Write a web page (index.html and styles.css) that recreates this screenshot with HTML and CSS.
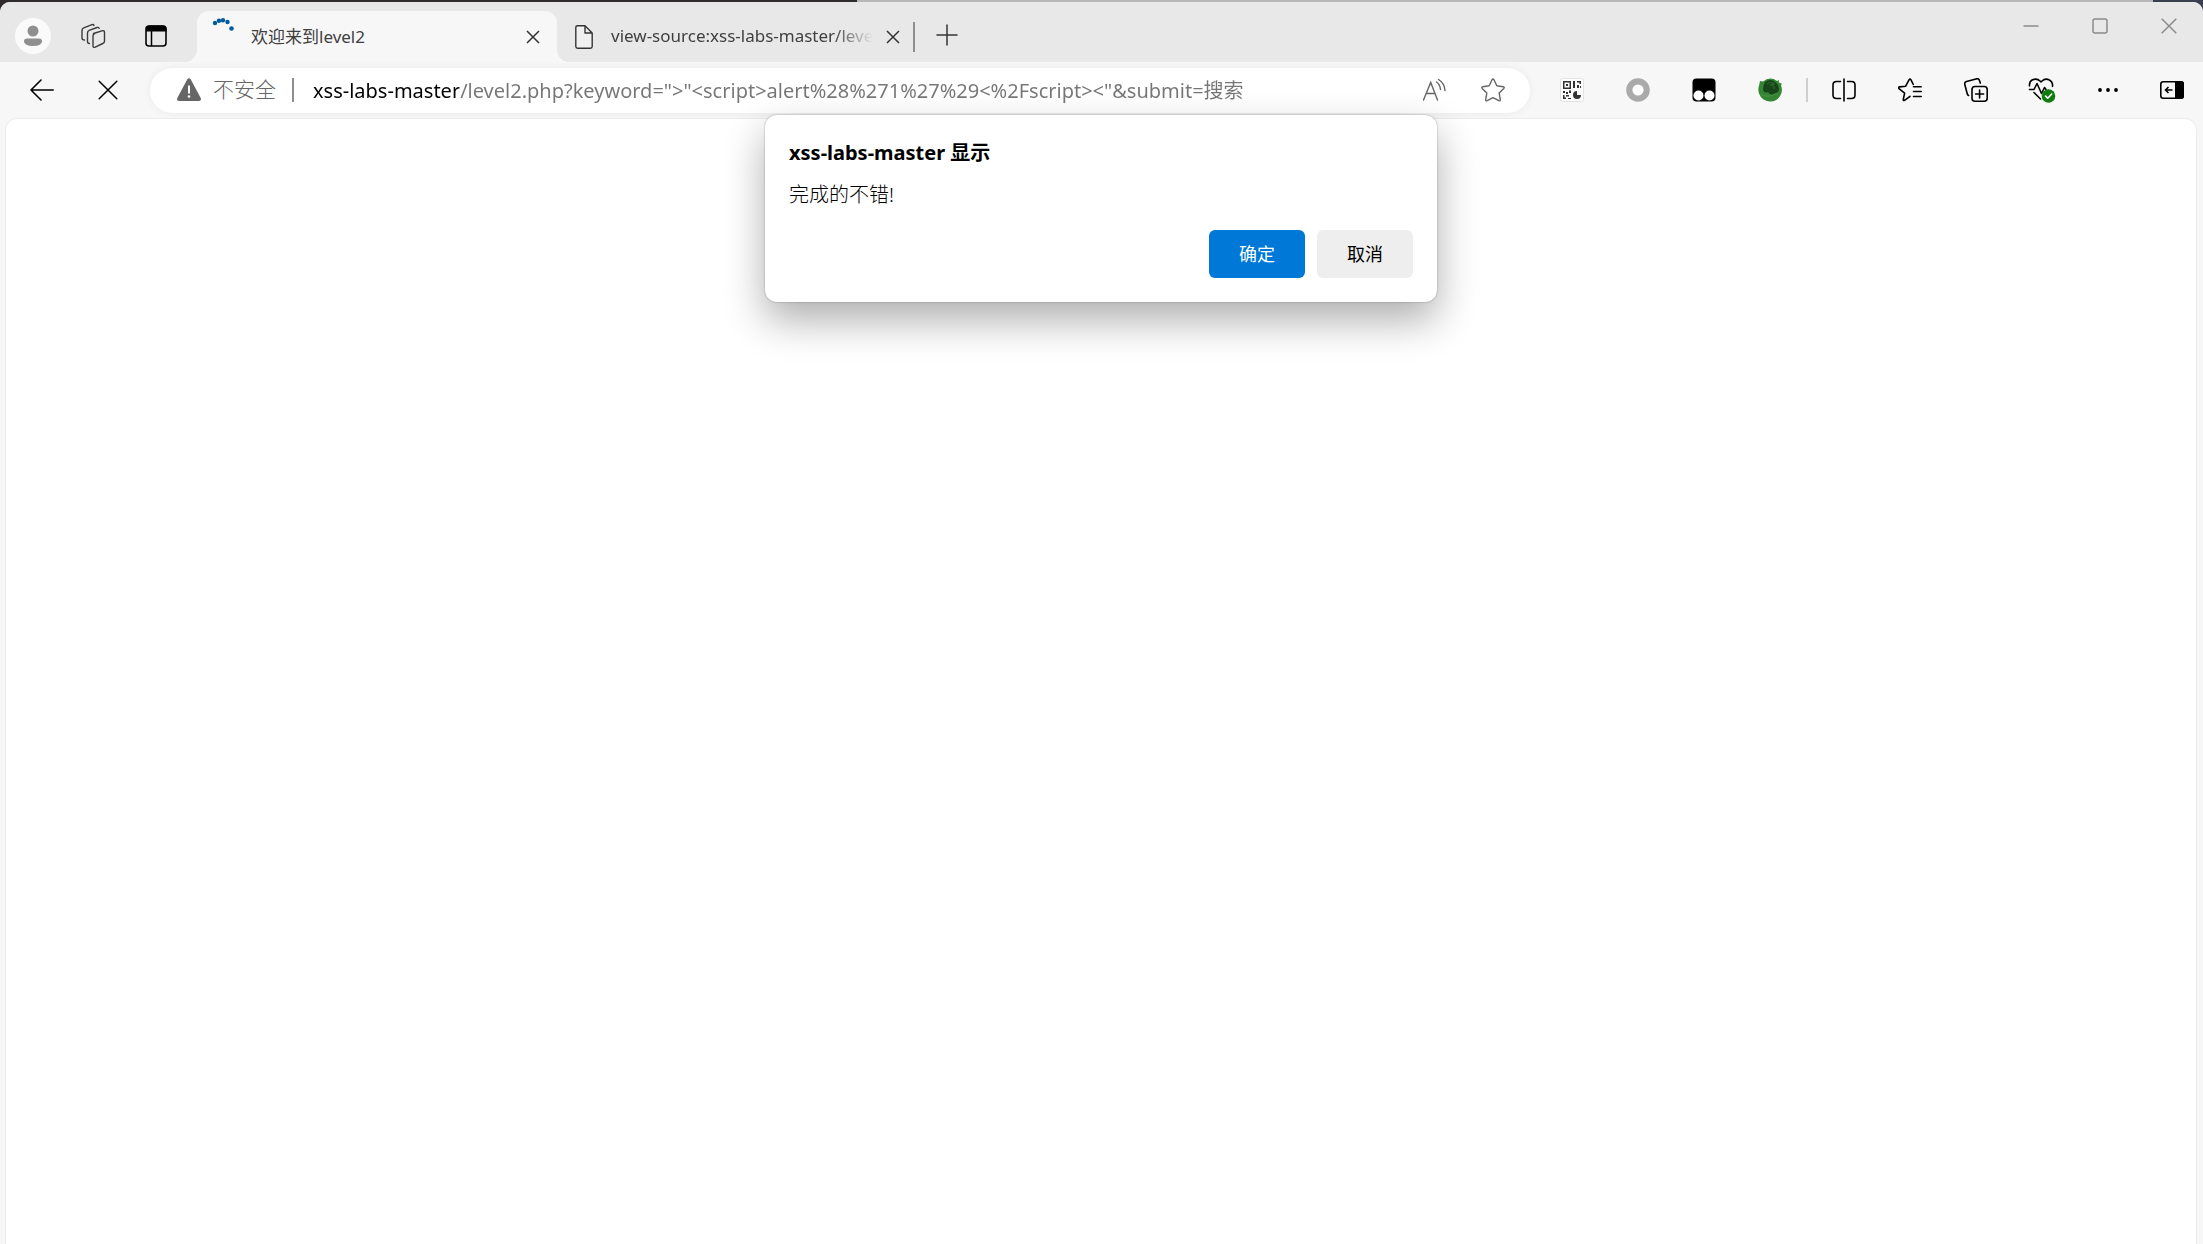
FILE: index.html
```html
<!DOCTYPE html>
<html lang="zh-CN">
<head>
<meta charset="utf-8">
<title>欢迎来到level2</title>
<link rel="stylesheet" href="styles.css">
</head>
<body>
<div class="browser">
  <header class="tabstrip">
    <div class="strip-tools">
      <button class="avatar" aria-label="个人资料"><svg width="36" height="36" viewBox="0 0 36 36"><circle cx="18" cy="18" r="18" fill="#fafafa"/><circle cx="18" cy="13" r="5.500" fill="#8f8f8f"/><path d="M12 20.500h12q3 0 3 2.700 0 4.800-9 4.800t-9-4.800q0-2.700 3-2.700z" fill="#8f8f8f"/></svg></button>
      <button class="strip-button" aria-label="工作区"><svg width="26" height="26" viewBox="0 0 26 26" fill="none" stroke="#3b3b3b" stroke-width="1.400" stroke-linecap="round" stroke-linejoin="round"><path d="M13.500 10.500 22 7.800q2.500-.6 2.500 1.600v8.800q0 1.600-1.700 2.300l-7.600 3.600q-2.200.8-2.200-1.300v-9.700q0-2 1.600-2.600z"/><path d="M9.500 20.500q-2 0-2-2V10q0-2 1.700-2.600L17 4.500q1.600-.4 2.200.8"/><path d="M4.500 17q-2.500 0-2.500-2V7.200q0-1.700 1.700-2.400l8.300-3.200q1.500-.4 2 .8"/></svg></button>
      <button class="strip-button" aria-label="标签操作"><svg width="22" height="22" viewBox="0 0 22 22"><rect x="1" y="1" width="20" height="20" rx="3" fill="none" stroke="#000" stroke-width="1.600"/><path d="M1 6.500V4q0-3.500 3.500-3.500h13Q21.500.5 21.500 4v2.500z"/><path d="M6.500 6v15" stroke="#000" stroke-width="1.500"/></svg></button>
    </div>
    <div class="tab tab-active">
      <svg class="tab-icon" width="24" height="24" viewBox="0 0 24 24" fill="#005ba1"><circle cx="3" cy="5" r="2.200"/><circle cx="7" cy="2.800" r="2.200"/><circle cx="11" cy="2.300" r="2.200"/><circle cx="15.500" cy="4" r="2.200"/><circle cx="19.500" cy="10.500" r="2.300"/></svg>
      <span class="tab-title">欢迎来到level2</span>
      <button class="tab-close" aria-label="关闭标签页"><svg width="14" height="14" viewBox="0 0 14 14"><path d="M1 1l12 12M13 1 1 13" stroke="#333" stroke-width="1.500"/></svg></button>
    </div>
    <div class="tab">
      <svg class="tab-icon" width="24" height="24" viewBox="0 0 24 24" fill="#f0f0f0" stroke="#333" stroke-width="1.400" stroke-linejoin="round"><path d="M13 .8H5.500Q3.800.8 3.800 2.500v19q0 1.700 1.700 1.700h13q1.700 0 1.700-1.700V8zV8h7.200"/></svg>
      <span class="tab-title tab-title-fade">view-source:xss-labs-master/level2.php</span>
      <button class="tab-close" aria-label="关闭标签页"><svg width="14" height="14" viewBox="0 0 14 14"><path d="M1 1l12 12M13 1 1 13" stroke="#333" stroke-width="1.500"/></svg></button>
    </div>
    <span class="tab-divider"></span>
    <button class="new-tab" aria-label="新建标签页"><svg width="22" height="22" viewBox="0 0 22 22"><path d="M11 .5v21M.5 11h21" stroke="#333" stroke-width="1.500"/></svg></button>
    <div class="window-controls">
      <button aria-label="最小化"><svg width="16" height="16" viewBox="0 0 16 16"><path d="M.5 8h15" stroke="#8b8b8b" stroke-width="1.600"/></svg></button>
      <button aria-label="最大化"><svg width="16" height="16" viewBox="0 0 16 16"><rect x="1" y="1" width="14" height="14" rx="2" fill="none" stroke="#8b8b8b" stroke-width="1.500"/></svg></button>
      <button aria-label="关闭"><svg width="16" height="16" viewBox="0 0 16 16"><path d="M.7.7l14.600 14.600M15.300.7.7 15.300" stroke="#8b8b8b" stroke-width="1.500"/></svg></button>
    </div>
  </header>

  <nav class="toolbar">
    <button class="tool" aria-label="返回"><svg width="24" height="22" viewBox="0 0 24 22" fill="none" stroke="#000" stroke-width="1.600" stroke-linecap="round" stroke-linejoin="round"><path d="M23.200 11H1M11 1 1 11l10 10"/></svg></button>
    <button class="tool" aria-label="停止"><svg width="20" height="20" viewBox="0 0 20 20" stroke="#000" stroke-width="1.500" stroke-linecap="round"><path d="M1.200 1.200l17.600 17.600M18.800 1.200 1.200 18.800"/></svg></button>
    <form class="omnibox">
      <button type="button" class="site-info"><svg width="24" height="24" viewBox="0 0 24 24"><path d="M10.200 1.500q1.800-2.500 3.600 0L23.700 20q.8 3-1.700 3H2Q-.5 23 .3 20z" fill="#666"/><path d="M12 7.500v8" stroke="#fff" stroke-width="2"/><circle cx="12" cy="18.500" r="1.300" fill="#fff"/></svg><span>不安全</span></button>
      <span class="omnibox-divider"></span>
      <input class="address" type="text" aria-label="地址栏" spellcheck="false" value="xss-labs-master/level2.php?keyword=&quot;&gt;&quot;&lt;script&gt;alert%28%271%27%29&lt;%2Fscript&gt;&lt;&quot;&amp;submit=搜索">
      <button type="button" class="omnibox-action" aria-label="大声朗读"><svg width="24" height="24" viewBox="0 0 24 24" fill="none" stroke="#666" stroke-width="1.400" stroke-linecap="round"><path d="M1.500 22 8.700 4.500 15.500 22M4.200 15.500h8.800M14.500 4q3.500 2.500 4 7.500M16.500 1.500q6 3.500 6.500 11"/></svg></button>
      <button type="button" class="omnibox-action" aria-label="收藏此页"><svg width="24" height="24" viewBox="0 0 24 24" fill="none" stroke="#666" stroke-width="1.400" stroke-linejoin="round"><path d="M11 1.800q1-1.600 2 0l2.800 6 6.400.9q1.700.4.600 1.700l-4.600 4.700 1.100 6.500q.1 1.800-1.500 1.100L12 19.600l-5.800 3.100q-1.600.7-1.500-1.100l1.100-6.500-4.600-4.700Q.1 9.100 1.800 8.700l6.400-.9z"/></svg></button>
    </form>
    <div class="tool-group">
      <button class="tool" aria-label="二维码"><svg width="24" height="24" viewBox="0 0 24 24"><rect x=".5" y=".5" width="23" height="23" rx="2" fill="#fff" stroke="#e2e2e2"/><g fill="#333"><path fill-rule="evenodd" d="M3 3h8v8H3zm1.500 1.500v5h5v-5z"/><path d="M6 6h2v2H6zM13 3h2v7h-2zM17 3h4v3h-1.500V4.500H17zM17 7h2v3h-2zM20 8h1v2h-1zM3 13h2v2H3zM6 14h2v2H6zM9 12.500h2V15H9zM3 17h1.500v2.500H6V21H3zM6 17h3v1.500H6zM8 20h3v1H8z"/><path d="M17 17v-4a4 4 0 1 0 4 4z"/></g></svg></button>
      <button class="tool" aria-label="扩展"><svg width="24" height="24" viewBox="0 0 24 24"><circle cx="12" cy="12" r="8.700" fill="#fff" stroke="#aaa" stroke-width="6.200"/></svg></button>
      <button class="tool" aria-label="用户脚本"><svg width="24" height="24" viewBox="0 0 24 24"><rect x=".5" y=".5" width="23" height="23" rx="4"/><circle cx="6.500" cy="17.500" r="5" fill="#fff"/><circle cx="17.500" cy="17.500" r="5" fill="#fff"/></svg></button>
      <button class="tool" aria-label="代理"><svg width="24" height="24" viewBox="0 0 24 24"><path d="M2 3l3 .5Q12-2 19 3l2-1-.3 2.500 3 1-.6 2q2 6-1 10.500-4 6-10.500 5.500Q4 23 1.200 16-.5 11 1.200 7z" fill="#348634"/><path d="M7 4q7-5 13 3 3 7-3 9-5 2-7-2-4 2-5-3 0-4 2-7z" fill="#174519"/><path d="M9 6q4-3 7 0l-3 1q4 1 3 4" fill="none" stroke="#2f6a2c" stroke-width="1.200"/><path d="M3 16q6 5 16-1" fill="none" stroke="#4b9545"/></svg></button>
    </div>
    <span class="toolbar-divider"></span>
    <div class="tool-group">
      <button class="tool" aria-label="拆分屏幕"><svg width="24" height="24" viewBox="0 0 24 24" fill="none" stroke="#000" stroke-width="1.600" stroke-linecap="round"><path d="M12 1v22M8.500 3.500h-4Q1 3.500 1 7v10q0 3.500 3.500 3.500h4M15.500 3.500h4Q23 3.500 23 7v10q0 3.500-3.500 3.500h-4"/></svg></button>
      <button class="tool" aria-label="收藏夹"><svg width="24" height="24" viewBox="0 0 24 24" fill="none" stroke="#000" stroke-width="1.600" stroke-linecap="round" stroke-linejoin="round"><path d="M15.500 8.800h7.700M15.500 13.500h7.700M15.500 18.500h7.700M12 18.300l-5.500 4q-1.500.6-1.200-1l1.300-6.100L1 10.600q-1-1.300.7-1.700l6-.7L11 1.800q1-1.600 2 0l2.300 4.700"/></svg></button>
      <button class="tool" aria-label="集锦"><svg width="24" height="24" viewBox="0 0 24 24" fill="none" stroke="#000" stroke-width="1.600" stroke-linecap="round"><rect x="8" y="8.500" width="15.200" height="14.700" rx="3"/><path d="M15.600 12v8M11.600 16h8M4.600 17.500q-1-.4-1.300-1.500L.8 6.500Q.2 4.300 2.500 3.500l9.500-2.600q2.700-.8 3.500 1.600l.8 2.600"/></svg></button>
      <button class="tool" aria-label="浏览器概要"><svg width="28" height="26" viewBox="0 0 28 26" fill="none" stroke="#000" stroke-width="1.600" stroke-linecap="round" stroke-linejoin="round"><path d="M1.500 9Q1 4.500 4.500 2.800 9 1 12 4l1 1 1-1q3-3 7-1.200 4 2 3.500 6.700M1.500 12.500H6l3-6 4.500 10 3-6 1.500 2M6 15.500l6.500 6.500"/><circle cx="20.500" cy="19" r="6.800" fill="#107c10" stroke="none"/><path d="M17.500 19l2.200 2.200 4-4.200" stroke="#fff"/></svg></button>
      <button class="tool" aria-label="设置及其他"><svg width="22" height="6" viewBox="0 0 22 6"><circle cx="3" cy="3" r="1.900"/><circle cx="11" cy="3" r="1.900"/><circle cx="19" cy="3" r="1.900"/></svg></button>
      <button class="tool" aria-label="侧边栏"><svg width="24" height="18" viewBox="0 0 24 18"><rect x=".8" y=".8" width="22.400" height="16.400" rx="2.500" fill="none" stroke="#000" stroke-width="1.600"/><path d="M15 0h6q3 0 3 3v12q0 3-3 3h-6z"/><path d="M12.500 9h-7M8.500 6l-3 3 3 3" fill="none" stroke="#000" stroke-width="1.600"/></svg></button>
    </div>
  </nav>

  <main class="page">
    <div class="dialog" role="alertdialog" aria-labelledby="dialog-title" aria-describedby="dialog-message">
      <h1 class="dialog-title" id="dialog-title">xss-labs-master 显示</h1>
      <p class="dialog-message" id="dialog-message">完成的不错!</p>
      <div class="dialog-actions">
        <button class="dialog-button primary">确定</button>
        <button class="dialog-button">取消</button>
      </div>
    </div>
  </main>
</div>
</body>
</html>
```
FILE: styles.css
```css
* { box-sizing: border-box; }

body {
  margin: 0;
  padding-top: 2px;
  background: linear-gradient(90deg, #2f2b2c 857px, #b8b8b8 857px, #b8b8b8 calc(100% - 50px), #3b4050 calc(100% - 50px));
  font-family: "Noto Sans", "Noto Sans CJK SC", sans-serif;
  color: #000;
}

button, input {
  margin: 0;
  padding: 0;
  border: 0;
  background: none;
  font: inherit;
  color: inherit;
}

button {
  display: flex;
  align-items: center;
  justify-content: center;
}

svg { display: block; flex: none; }

.browser {
  display: flex;
  flex-direction: column;
  min-height: calc(100vh - 2px);
  border-radius: 10px 10px 0 0;
  background: #f7f7f7;
  overflow: hidden;
}

.tabstrip {
  display: flex;
  align-items: flex-end;
  height: 60px;
  background: #e8e8e8;
}

.strip-tools {
  display: flex;
  align-items: center;
  height: 52px;
  width: 197px;
  padding-left: 15px;
}

.avatar { margin-right: 10px; }
.strip-button { width: 63px; height: 36px; }

.tab {
  display: flex;
  align-items: center;
  width: 360px;
  height: 51px;
  padding: 0 17px 0 15px;
  border-radius: 12px 12px 0 0;
  font-size: 17px;
  color: #3f3f3f;
}

.tab-active {
  position: relative;
  background: #f7f7f7;
}

.tab-active::before,
.tab-active::after {
  content: "";
  position: absolute;
  bottom: 0;
  width: 12px;
  height: 12px;
}

.tab-active::before {
  right: 100%;
  background: radial-gradient(circle at 0 0, #e8e8e8 12px, #f7f7f7 12px);
}

.tab-active::after {
  left: 100%;
  background: radial-gradient(circle at 100% 0, #e8e8e8 12px, #f7f7f7 12px);
}

.tab-active .tab-icon { margin-bottom: 14px; }
.tab-icon { margin-right: 15px; }

.tab-title {
  flex: 1;
  padding-bottom: 2px;
  overflow: hidden;
  white-space: nowrap;
}

.tab-title-fade {
  mask-image: linear-gradient(90deg, #000 calc(100% - 40px), transparent);
}

.tab-close { margin-left: 13px; }

.tab-divider {
  width: 2px;
  height: 30px;
  margin: 0 21px 10px -4px;
  background: #8f8f8f;
}

.new-tab { height: 54px; }

.window-controls {
  display: flex;
  align-self: flex-start;
  margin-left: auto;
}

.window-controls button { width: 69px; height: 48px; }

.toolbar {
  display: flex;
  align-items: center;
  height: 56px;
  padding: 0 0 0 9px;
}

.tool-group { display: flex; }
.tool { width: 66px; height: 44px; }
.tool-group .tool:last-child:nth-child(6) { width: 62px; }

.omnibox {
  display: flex;
  flex: 1;
  align-items: center;
  min-width: 0;
  height: 45px;
  margin: 0 9px;
  padding: 0 8px 0 27px;
  border-radius: 23px;
  background: #fff;
  box-shadow: 0 0 8px rgba(0, 0, 0, 0.06);
  font-size: 20px;
}

.site-info {
  gap: 12px;
  font-size: 21px;
  font-weight: 300;
  line-height: 28px;
  color: #666;
}

.site-info span { padding-bottom: 2px; }

.omnibox-divider {
  width: 2px;
  height: 24px;
  margin: 0 19px 0 16px;
  background: #8f8f8f;
}

/* The host name is drawn black, the rest of the address grey. */
.address {
  flex: 1;
  min-width: 0;
  height: 36px;
  padding-bottom: 2px;
  background: linear-gradient(90deg, #000 146px, #767676 146px);
  background-clip: text;
  -webkit-text-fill-color: transparent;
}

.omnibox-action { width: 59px; height: 40px; }

.toolbar-divider {
  width: 2px;
  height: 24px;
  margin: 0 3px;
  background: #cfcfcf;
}

.page {
  position: relative;
  flex: 1;
  margin: 0 6px 0 5px;
  border: 1px solid #ebebeb;
  border-bottom: 0;
  border-radius: 12px 12px 0 0;
  background: #fff;
}

.dialog {
  position: absolute;
  top: -4px;
  left: 50%;
  width: 672px;
  padding: 24px;
  border-radius: 12px;
  background: #fff;
  box-shadow: 0 0 2px rgba(0, 0, 0, 0.35), 0 18px 40px rgba(0, 0, 0, 0.32);
  transform: translateX(-50%);
}

.dialog-title {
  margin: 0 0 14px;
  font-size: 20px;
  line-height: 28px;
}

.dialog-message {
  margin: 0 0 21px;
  font-size: 20px;
  font-weight: 300;
  line-height: 28px;
}

.dialog-actions {
  display: flex;
  justify-content: flex-end;
  gap: 12px;
}

.dialog-button {
  width: 96px;
  height: 48px;
  padding-bottom: 2px;
  border-radius: 6px;
  background: #eee;
  font-size: 18px;
}

.primary {
  background: #0078d7;
  color: #fff;
}
```
